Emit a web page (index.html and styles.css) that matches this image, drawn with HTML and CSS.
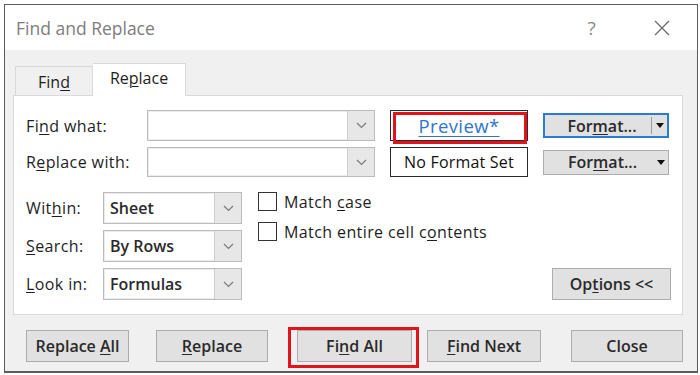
FILE: index.html
```html
<!DOCTYPE html>
<html lang="en">
<head>
  <meta charset="UTF-8">
  <title>Find and Replace</title>
  <link rel="stylesheet" href="styles.css">
</head>
<body>
  <div class="dialog">
    <div class="titlebar">
      <span class="title">Find and Replace</span>
      <span class="help">?</span>
      <svg class="close-x" width="16" height="16" viewBox="0 0 16 16">
        <path d="M1 1 L15 15 M15 1 L1 15" stroke="#6b6b6b" stroke-width="1.3" fill="none"/>
      </svg>
    </div>

    <div class="tabs">
      <div class="tab"><span>Fin<u>d</u></span></div>
      <div class="tab active"><span>Re<u>p</u>lace</span></div>
    </div>

    <div class="panel">
      <div class="top-grid">
        <label class="lbl">Fi<u>n</u>d what:</label>
        <div class="combo"><span class="combo-text"></span><span class="drop"><svg width="11" height="7" viewBox="0 0 11 7"><path d="M1 1 L5.5 5.5 L10 1" stroke="#7a7a7a" stroke-width="1.2" fill="none"/></svg></span></div>
        <div class="preview"><span class="preview-link">Preview*</span><span class="mark mark-preview"></span></div>
        <div class="fmt-btn focused"><span class="fmt-label">For<u>m</u>at...</span><span class="fmt-arrow split"><i class="tri"></i></span></div>

        <label class="lbl">R<u>e</u>place with:</label>
        <div class="combo"><span class="combo-text"></span><span class="drop"><svg width="11" height="7" viewBox="0 0 11 7"><path d="M1 1 L5.5 5.5 L10 1" stroke="#7a7a7a" stroke-width="1.2" fill="none"/></svg></span></div>
        <div class="preview plain"><span>No Format Set</span></div>
        <div class="fmt-btn"><span class="fmt-label">For<u>m</u>at...</span><span class="fmt-arrow"><i class="tri"></i></span></div>
      </div>

      <div class="lower">
        <div class="opt-grid">
          <label class="lbl">Wit<u>h</u>in:</label>
          <div class="select"><span class="select-text">Sheet</span><span class="drop"><svg width="11" height="7" viewBox="0 0 11 7"><path d="M1 1 L5.5 5.5 L10 1" stroke="#7a7a7a" stroke-width="1.2" fill="none"/></svg></span></div>

          <label class="lbl"><u>S</u>earch:</label>
          <div class="select"><span class="select-text">By Rows</span><span class="drop"><svg width="11" height="7" viewBox="0 0 11 7"><path d="M1 1 L5.5 5.5 L10 1" stroke="#7a7a7a" stroke-width="1.2" fill="none"/></svg></span></div>

          <label class="lbl"><u>L</u>ook in:</label>
          <div class="select"><span class="select-text">Formulas</span><span class="drop"><svg width="11" height="7" viewBox="0 0 11 7"><path d="M1 1 L5.5 5.5 L10 1" stroke="#7a7a7a" stroke-width="1.2" fill="none"/></svg></span></div>
        </div>

        <div class="checks">
          <div class="check"><span class="box"></span><span>Match <u>c</u>ase</span></div>
          <div class="check"><span class="box"></span><span>Match entire cell c<u>o</u>ntents</span></div>
        </div>

        <div class="btn options"><span>Op<u>t</u>ions &lt;&lt;</span></div>
      </div>
    </div>

    <div class="footer">
      <div class="btn b-replace-all"><span>Replace <u>A</u>ll</span></div>
      <div class="btn b-replace"><span><u>R</u>eplace</span></div>
      <div class="btn b-find-all"><span>Fi<u>n</u>d All</span><span class="mark mark-find"></span></div>
      <div class="btn b-find-next"><span><u>F</u>ind Next</span></div>
      <div class="btn b-close"><span>Close</span></div>
    </div>
  </div>
</body>
</html>
```

FILE: styles.css
```css
body {
  margin: 0;
  background-color: #ffffff;
  font-family: "Open Sans", "Noto Sans", sans-serif;
  font-size: 16px;
  letter-spacing: 0.4px;
  color: #1e1e1e;
}

u {
  text-decoration-thickness: 1px;
  text-underline-offset: 2px;
}

.dialog {
  margin: 4px 0 0 4px;
  width: 694px;
  height: 369px;
  box-sizing: border-box;
  border: 1px solid #5c5c5c;
  border-bottom-width: 2px;
  background-color: #f0f0f0;
  display: flex;
  flex-direction: column;
}

/* title bar */
.titlebar {
  height: 45px;
  flex: none;
  background-color: #ffffff;
  display: flex;
  align-items: center;
  padding-left: 11px;
}

.title {
  font-size: 17.5px;
  letter-spacing: 0;
  color: #7d7d7d;
}

.help {
  margin-left: auto;
  font-size: 19px;
  color: #8a8a8a;
}

.close-x {
  margin: 0 27px 0 58px;
}

/* tabs */
.tabs {
  display: flex;
  align-items: flex-end;
  padding-left: 10px;
  margin-top: 13px;
  position: relative;
  z-index: 1;
}

.tab {
  width: 78px;
  height: 29px;
  box-sizing: border-box;
  border: 1px solid #d9d9d9;
  border-bottom: none;
  display: flex;
  align-items: center;
  justify-content: center;
  padding-top: 2px;
  letter-spacing: 0;
}

.tab.active {
  width: 93px;
  height: 33px;
  background-color: #ffffff;
  border-left: none;
  margin-bottom: -1px;
  padding-top: 0;
  padding-bottom: 4px;
}

/* tab panel */
.panel {
  margin: 0 14px 0 8px;
  height: 220px;
  box-sizing: border-box;
  background-color: #ffffff;
  border: 1px solid #d9d9d9;
  padding: 14px 11px 0 12px;
}

.top-grid {
  display: grid;
  grid-template-columns: 106px 228px 138px 126px;
  grid-template-rows: 31px 30px;
  column-gap: 15px;
  row-gap: 6px;
  align-items: center;
}

.lbl {
  white-space: nowrap;
}

.combo,
.select {
  height: 100%;
  box-sizing: border-box;
  border: 1px solid #bcbcbc;
  box-shadow: inset 0 0 0 1px #ececec;
  background-color: #ffffff;
  display: flex;
  align-items: stretch;
}

.combo-text,
.select-text {
  flex: 1;
  display: flex;
  align-items: center;
  padding-left: 6px;
}

.select-text {
  font-weight: 600;
  letter-spacing: 0;
  color: #2a2a2a;
}

.drop {
  width: 26px;
  flex: none;
  background-color: #e7e7e7;
  border-left: 1px solid #cfcfcf;
  display: flex;
  align-items: center;
  justify-content: center;
}

.preview {
  height: 31px;
  box-sizing: border-box;
  border: 1px solid #2b2b2b;
  background-color: #ffffff;
  display: flex;
  align-items: center;
  justify-content: center;
  position: relative;
}

.preview.plain {
  height: 30px;
  color: #111;
  letter-spacing: 0.2px;
}

.preview-link {
  font-size: 18.5px;
  color: #2f74d0;
  text-decoration: underline;
  text-decoration-thickness: 1px;
  text-underline-offset: 3px;
}

/* red annotation boxes */
.mark {
  position: absolute;
  border: 3px solid #e3131b;
  pointer-events: none;
}

.mark-preview {
  left: 2px;
  right: 0;
  top: 1px;
  bottom: -4px;
}

.mark-find {
  left: -10px;
  right: -8px;
  top: -4px;
  bottom: -7px;
}

.fmt-btn {
  height: 25px;
  box-sizing: border-box;
  background-color: #e1e1e1;
  border: 1px solid #adadad;
  display: flex;
  align-items: center;
  font-weight: 600;
  letter-spacing: 0;
  color: #2a2a2a;
}

.fmt-btn.focused {
  border: 2px solid #2a7bd6;
}

.fmt-label {
  flex: 1;
  text-align: center;
  padding-left: 8px;
}

.fmt-arrow {
  width: 15px;
  height: 17px;
  display: flex;
  align-items: center;
  justify-content: center;
}

.fmt-arrow.split {
  border-left: 1px solid #9c9c9c;
}

.tri {
  width: 0;
  height: 0;
  border-left: 4px solid transparent;
  border-right: 4px solid transparent;
  border-top: 5px solid #111;
}

/* options area */
.lower {
  display: flex;
  margin-top: 15px;
}

.opt-grid {
  display: grid;
  grid-template-columns: 77px 139px;
  grid-auto-rows: 32px;
  row-gap: 6px;
  align-items: center;
}

.checks {
  margin-left: 16px;
  display: flex;
  flex-direction: column;
  gap: 11px;
}

.check {
  display: flex;
  align-items: center;
  gap: 7px;
  height: 19px;
}

.box {
  width: 19px;
  height: 19px;
  flex: none;
  box-sizing: border-box;
  border: 1px solid #333;
  background-color: #ffffff;
}

.btn {
  box-sizing: border-box;
  height: 32px;
  background-color: #e1e1e1;
  border: 1px solid #adadad;
  display: flex;
  align-items: center;
  justify-content: center;
  font-weight: 600;
  letter-spacing: 0;
  color: #2a2a2a;
  position: relative;
}

.options {
  width: 119px;
  margin-left: auto;
  align-self: flex-end;
}

/* bottom buttons */
.footer {
  display: flex;
  margin-top: 15px;
  padding-left: 21px;
}

.b-replace-all { width: 103px; }
.b-replace { width: 112px; margin-left: 27px; }
.b-find-all { width: 115px; margin-left: 29px; }
.b-find-next { width: 114px; margin-left: 15px; }
.b-close { width: 112px; margin-left: 30px; }
```
